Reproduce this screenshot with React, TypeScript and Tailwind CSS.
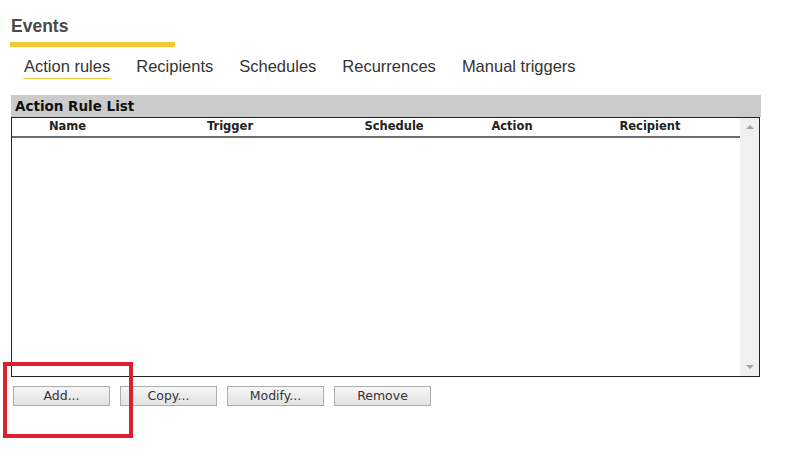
const tabs = ['Action rules', 'Recipients', 'Schedules', 'Recurrences', 'Manual triggers'];

const columns = [
  { label: 'Name', width: 'w-[111px]' },
  { label: 'Trigger', width: 'w-[214px]' },
  { label: 'Schedule', width: 'w-[114px]' },
  { label: 'Action', width: 'w-[122px]' },
  { label: 'Recipient', width: 'w-[154px]' },
];

const buttons = ['Add...', 'Copy...', 'Modify...', 'Remove'];

export default function App() {
  return (
    <div className="relative h-[467px] w-[800px] overflow-hidden bg-white font-['DejaVu_Sans',sans-serif]">
      {/* Page title */}
      <div className="pl-[11px] pt-[15px]">
        <h1 className="font-['Liberation_Sans',Arial,sans-serif] text-[17.5px] font-bold leading-[22px] text-[#4a4a4a]">
          Events
        </h1>
        <div className="mt-[5px] h-[5px] w-[165px] -ml-px bg-[#f4c935]" />
      </div>

      {/* Tabs */}
      <div className="mt-[9px] flex gap-[26px] pl-[24px] font-['Liberation_Sans',Arial,sans-serif] text-[16.5px] leading-[20px] text-[#333]">
        {tabs.map((tab, i) => (
          <div key={tab} className="flex flex-col">
            <span>{tab}</span>
            {i === 0 && <div className="mt-[2px] h-px -mx-px bg-[#f0c63a]" />}
          </div>
        ))}
      </div>

      {/* Action rule list panel */}
      <div className="ml-[11px] mt-[16px] w-[750px]">
        <div className="flex h-[22px] items-center bg-[#cbcbcb] pl-[4px] text-[13.5px] font-bold text-[#111]">
          Action Rule List
        </div>
        <div className="flex h-[260px] w-[749px] border border-[#222] bg-white">
          <div className="flex-1">
            <div className="flex h-[20px] items-center border-b-2 border-[#6e6e6e] text-[11.5px] font-bold text-[#222]">
              {columns.map((c) => (
                <div key={c.label} className={`${c.width} text-center`}>
                  {c.label}
                </div>
              ))}
            </div>
          </div>
          {/* scrollbar */}
          <div className="flex w-[19px] flex-col items-center justify-between bg-[#f0f0f0] py-[7px]">
            <div className="h-0 w-0 border-x-[4px] border-b-[4px] border-x-transparent border-b-[#a3a3a3]" />
            <div className="h-0 w-0 border-x-[4px] border-t-[4px] border-x-transparent border-t-[#a3a3a3]" />
          </div>
        </div>
      </div>

      {/* Buttons */}
      <div className="ml-[13px] mt-[9px] flex gap-[10px]">
        {buttons.map((b) => (
          <button
            key={b}
            className="h-[20px] w-[97px] border border-[#adadad] bg-gradient-to-b from-[#f6f6f6] to-[#e2e2e2] text-[12.5px] leading-none text-[#333]"
          >
            {b}
          </button>
        ))}
      </div>

      {/* Highlight box */}
      <div className="absolute left-[3px] top-[362px] h-[76px] w-[130px] border-[4px] border-[#d8232f]" />
    </div>
  );
}
